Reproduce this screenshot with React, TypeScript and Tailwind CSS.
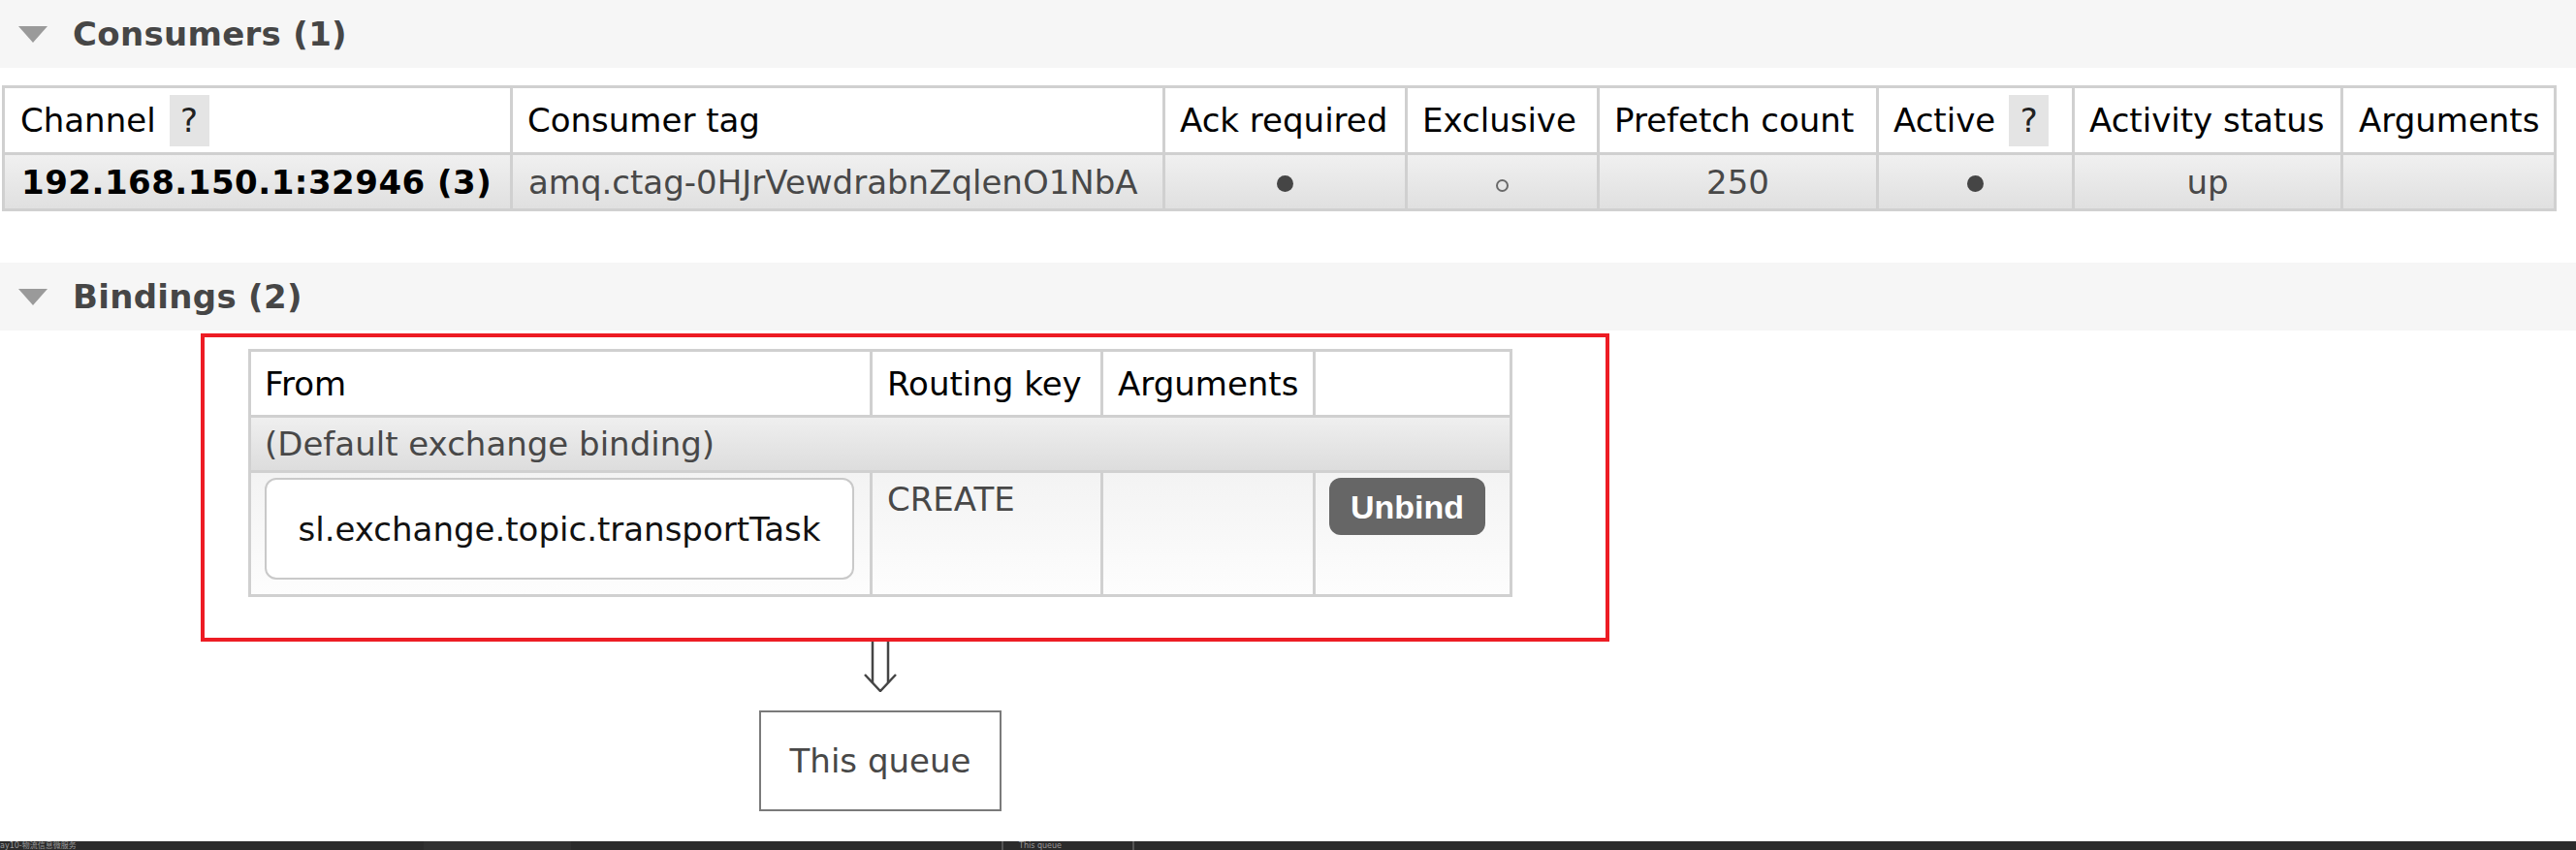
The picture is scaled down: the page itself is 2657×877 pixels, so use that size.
import React from 'react';

const cell = "border-r-[3px] border-b-[3px] border-[#d0d0d0]";

const SectionHeader: React.FC<{ title: string }> = ({ title }) => (
    <div className="h-[70px] bg-[#f6f6f6] flex items-center pl-[19px]">
        <svg width="30" height="17" viewBox="0 0 30 17" className="shrink-0">
            <polygon points="0,0 30,0 15,17" fill="#9a9a9a" />
        </svg>
        <h2 className="ml-[26px] text-[34px] leading-[40px] font-bold text-[#464646] tracking-[0.3px]">{title}</h2>
    </div>
);

const Help: React.FC = () => (
    <span className="ml-[14px] w-[41px] h-[53px] bg-[#e4e4e4] flex items-center justify-center text-[#222]">?</span>
);

const Dot: React.FC = () => <span className="block w-[17px] h-[17px] rounded-full bg-[#454545] mt-[4px]" />;
const Ring: React.FC = () => <span className="block w-[13px] h-[13px] rounded-full border-2 border-[#6a6a6a] mt-[8px]" />;

const App: React.FC = () => {
    const headers = ["Consumer tag", "Ack required", "Exclusive", "Prefetch count"];

    return (
        <div className="h-[877px] w-[2657px] bg-white flex flex-col overflow-hidden font-['DejaVu_Sans','Noto_Sans_CJK_SC',sans-serif] text-[34px] leading-[40px]">
            <SectionHeader title="Consumers (1)" />

            {/* consumers table */}
            <div className="mt-[18px] ml-[2px] w-[2635px] border-l-[3px] border-t-[3px] border-[#d0d0d0] grid grid-cols-[524px_673px_250px_198px_288px_202px_277px_220px]">
                <div className={`${cell} h-[69px] bg-white pl-[16px] flex items-center text-black`}>
                    Channel <Help />
                </div>
                {headers.map((h) => (
                    <div key={h} className={`${cell} h-[69px] bg-white pl-[15px] flex items-center text-black whitespace-nowrap`}>{h}</div>
                ))}
                <div className={`${cell} h-[69px] bg-white pl-[15px] flex items-center text-black`}>
                    Active <Help />
                </div>
                <div className={`${cell} h-[69px] bg-white pl-[15px] flex items-center text-black whitespace-nowrap`}>Activity status</div>
                <div className={`${cell} h-[69px] bg-white pl-[16px] flex items-center text-black`}>Arguments</div>

                <div className={`${cell} h-[58px] bg-linear-to-b from-[#f0f0f0] to-[#e0e0e0] pl-[17px] flex items-center font-bold text-black whitespace-nowrap tracking-[0.5px]`}>192.168.150.1:32946 (3)</div>
                <div className={`${cell} h-[58px] bg-linear-to-b from-[#f0f0f0] to-[#e0e0e0] pl-[16px] flex items-center text-[#484848] whitespace-nowrap`}>amq.ctag-0HJrVewdrabnZqlenO1NbA</div>
                <div className={`${cell} h-[58px] bg-linear-to-b from-[#f0f0f0] to-[#e0e0e0] flex items-center justify-center`}><Dot /></div>
                <div className={`${cell} h-[58px] bg-linear-to-b from-[#f0f0f0] to-[#e0e0e0] flex items-center justify-center`}><Ring /></div>
                <div className={`${cell} h-[58px] bg-linear-to-b from-[#f0f0f0] to-[#e0e0e0] flex items-center justify-center text-[#484848]`}>250</div>
                <div className={`${cell} h-[58px] bg-linear-to-b from-[#f0f0f0] to-[#e0e0e0] flex items-center justify-center`}><Dot /></div>
                <div className={`${cell} h-[58px] bg-linear-to-b from-[#f0f0f0] to-[#e0e0e0] flex items-center justify-center text-[#484848]`}>up</div>
                <div className={`${cell} h-[58px] bg-linear-to-b from-[#f0f0f0] to-[#e0e0e0]`} />
            </div>

            <div className="mt-[53px]">
                <SectionHeader title="Bindings (2)" />
            </div>

            {/* bindings */}
            <div className="relative w-[1816px] flex flex-col items-center">
                <div className="mt-[19px] w-[1304px] border-l-[3px] border-t-[3px] border-[#d0d0d0] grid grid-cols-[641px_238px_219px_203px]">
                    <div className={`${cell} h-[68px] bg-white pl-[14px] flex items-center text-black`}>From</div>
                    <div className={`${cell} h-[68px] bg-white pl-[15px] flex items-center text-black whitespace-nowrap`}>Routing key</div>
                    <div className={`${cell} h-[68px] bg-white pl-[15px] flex items-center text-black`}>Arguments</div>
                    <div className={`${cell} h-[68px] bg-white`} />

                    <div className={`${cell} col-span-4 h-[57px] bg-linear-to-b from-[#efefef] to-[#dddddd] pl-[14px] flex items-center text-[#484848]`}>(Default exchange binding)</div>

                    <div className={`${cell} h-[128px] bg-linear-to-b from-[#f3f3f3] to-[#fdfdfd] pl-[14px] pt-[5px]`}>
                        <div className="w-[608px] h-[105px] border-2 border-[#c9c9c9] rounded-[12px] bg-white flex items-center justify-center text-[#111] whitespace-nowrap">
                            sl.exchange.topic.transportTask
                        </div>
                    </div>
                    <div className={`${cell} h-[128px] bg-linear-to-b from-[#f3f3f3] to-[#fdfdfd] pl-[15px] pt-[7px] text-[#484848]`}>CREATE</div>
                    <div className={`${cell} h-[128px] bg-linear-to-b from-[#f3f3f3] to-[#fdfdfd]`} />
                    <div className={`${cell} h-[128px] bg-linear-to-b from-[#f3f3f3] to-[#fdfdfd] pl-[14px] pt-[5px]`}>
                        <button className="w-[161px] h-[59px] bg-[#666666] rounded-[12px] text-white font-bold font-['Liberation_Sans',sans-serif] text-[34px] leading-[40px]">Unbind</button>
                    </div>
                </div>

                <svg width="34" height="52" viewBox="0 0 34 52" className="mt-[46px]">
                    <g stroke="#454545" strokeWidth="2.5" fill="none">
                        <path d="M9 0 V42.5 M25 0 V42.5" />
                        <path d="M1 34 L17 51 L33 34" />
                    </g>
                </svg>

                <div className="mt-[19px] w-[250px] h-[104px] border-2 border-[#7a7a7a] flex items-center justify-center text-[#484848]">This queue</div>

                {/* red annotation frame */}
                <div className="absolute left-[207px] top-[3px] w-[1453px] h-[318px] border-[4px] border-[#ed1c24] pointer-events-none" />
            </div>

            {/* dark strip at the bottom */}
            <div className="mt-auto h-[9px] bg-[#2b2b2b] flex items-center overflow-hidden text-[8px] leading-[9px] text-[#9a9a9a]">
                <div className="w-[437px] whitespace-nowrap">ay10-物流信息微服务</div>
                <div className="w-[152px] h-full bg-[#313131]" />
                <div className="w-[444px]" />
                <div className="w-[137px] h-full border-x-2 border-[#555] pl-[16px] whitespace-nowrap">This queue</div>
            </div>
        </div>
    );
};

export default App;
